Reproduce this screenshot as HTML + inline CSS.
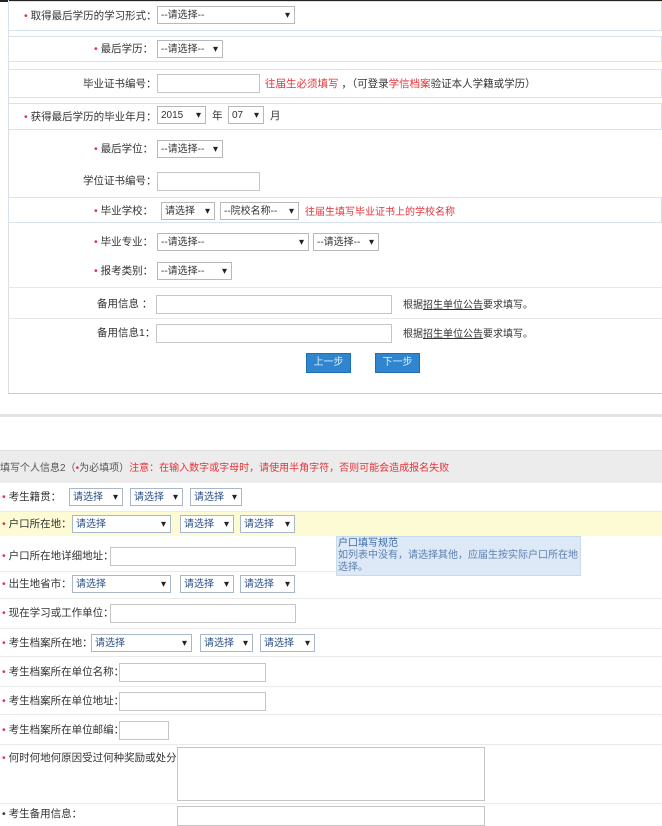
<!DOCTYPE html>
<html><head><meta charset="utf-8">
<style>
*{margin:0;padding:0;box-sizing:border-box}
body{width:662px;height:813px;overflow:hidden;background:#fff;position:relative;font-family:"Liberation Sans","Noto Sans CJK SC",sans-serif;font-size:11px;color:#333}
.a{position:absolute}
.box{position:absolute;left:8px;right:0;border:1px solid #d6e3ef;background:#fff}
.sel{position:absolute;height:18px;border:1px solid #b9b9b9;background:#fff;font-size:10px;line-height:17px;padding-left:3px;color:#333}
.sel:after{content:"▾";position:absolute;right:4px;top:0;font-size:10px;color:#222}
.sel2{border-color:#a9b8c8;color:#2c4f8a}
.inp{position:absolute;border:1px solid #c5c5c5;background:#fff;height:19px}
.lbl{position:absolute;font-size:10.5px;white-space:nowrap;color:#333;margin-top:-2px}
.st{color:#e0334a}
.red{color:#e8333a}
.line{position:absolute;left:8px;right:0;height:1px;background:#e6e9ec}
.line2{position:absolute;left:0;right:0;height:1px;background:#eaeaea}
.btn{position:absolute;height:20px;width:45px;background:#2f86cf;border:1px solid #1e6fb3;color:#dbeeff;font-size:10px;text-align:center;line-height:18px}
</style></head><body>
<div class="a" style="left:0;top:0;width:662px;height:2px;background:#222"></div>
<div class="a" style="left:8px;top:0;width:1px;height:394px;background:#ddd"></div>
<div class="a" style="left:8px;top:393px;width:654px;height:1px;background:#ccc"></div>

<div class="box" style="top:1px;height:30px"></div>
<div class="lbl" style="left:24px;top:10px"><span class="st">•</span> 取得最后学历的学习形式：</div>
<div class="sel" style="left:157px;top:6px;width:138px">--请选择--</div>

<div class="box" style="top:36px;height:26px"></div>
<div class="lbl" style="left:94px;top:43px"><span class="st">•</span> 最后学历：</div>
<div class="sel" style="left:157px;top:40px;width:66px">--请选择--</div>

<div class="box" style="top:69px;height:29px"></div>
<div class="lbl" style="left:83px;top:78px">毕业证书编号：</div>
<div class="inp" style="left:157px;top:74px;width:103px"></div>
<div class="lbl" style="left:265px;top:78px"><span class="red">往届生必须填写</span> ，（可登录<span class="red">学信档案</span>验证本人学籍或学历）</div>

<div class="box" style="top:103px;height:27px"></div>
<div class="lbl" style="left:24px;top:111px"><span class="st">•</span> 获得最后学历的毕业年月：</div>
<div class="sel" style="left:157px;top:106px;width:49px">2015</div>
<div class="lbl" style="left:212px;top:110px">年</div>
<div class="sel" style="left:228px;top:106px;width:36px">07</div>
<div class="lbl" style="left:270px;top:110px">月</div>

<div class="lbl" style="left:94px;top:143px"><span class="st">•</span> 最后学位：</div>
<div class="sel" style="left:157px;top:140px;width:66px">--请选择--</div>

<div class="lbl" style="left:83px;top:175px">学位证书编号：</div>
<div class="inp" style="left:157px;top:172px;width:103px"></div>

<div class="box" style="top:197px;height:26px"></div>
<div class="lbl" style="left:94px;top:205px"><span class="st">•</span> 毕业学校：</div>
<div class="sel" style="left:161px;top:202px;width:54px">请选择</div>
<div class="sel" style="left:220px;top:202px;width:79px">--院校名称--</div>
<div class="lbl red" style="left:305px;top:205px;font-size:10px">往届生填写毕业证书上的学校名称</div>

<div class="lbl" style="left:94px;top:236px"><span class="st">•</span> 毕业专业：</div>
<div class="sel" style="left:157px;top:233px;width:152px">--请选择--</div>
<div class="sel" style="left:313px;top:233px;width:66px">--请选择--</div>

<div class="lbl" style="left:94px;top:265px"><span class="st">•</span> 报考类别：</div>
<div class="sel" style="left:157px;top:262px;width:75px">--请选择--</div>
<div class="line" style="top:287px"></div>

<div class="lbl" style="left:97px;top:298px">备用信息 ：</div>
<div class="inp" style="left:156px;top:295px;width:236px"></div>
<div class="lbl" style="left:403px;top:298px;font-size:10px">根据<u>招生单位公告</u>要求填写。</div>
<div class="line" style="top:318px"></div>
<div class="lbl" style="left:97px;top:327px">备用信息1：</div>
<div class="inp" style="left:156px;top:324px;width:236px"></div>
<div class="lbl" style="left:403px;top:327px;font-size:10px">根据<u>招生单位公告</u>要求填写。</div>

<div class="btn" style="left:306px;top:353px">上一步</div>
<div class="btn" style="left:375px;top:353px">下一步</div>

<div class="a" style="left:0;top:414px;width:662px;height:3px;background:#e4e4e4"></div>

<div class="a" style="left:0;top:450px;width:662px;height:33px;background:#ececec;border-top:1px solid #ddd"></div>
<div class="lbl" style="left:0;top:461px;font-size:10px;color:#555">填写个人信息2（<span class="st">•</span>为必填项）<span class="red">注意：在输入数字或字母时，请使用半角字符，否则可能会造成报名失败</span></div>

<div class="lbl" style="left:2px;top:491px"><span class="st">•</span> 考生籍贯：</div>
<div class="sel sel2" style="left:69px;top:488px;width:54px">请选择</div>
<div class="sel sel2" style="left:130px;top:488px;width:53px">请选择</div>
<div class="sel sel2" style="left:190px;top:488px;width:52px">请选择</div>
<div class="line2" style="top:511px"></div>

<div class="a" style="left:0;top:512px;width:662px;height:24px;background:#fdfbd4"></div>
<div class="lbl" style="left:2px;top:518px"><span class="st">•</span> 户口所在地：</div>
<div class="sel sel2" style="left:72px;top:515px;width:99px">请选择</div>
<div class="sel sel2" style="left:180px;top:515px;width:54px">请选择</div>
<div class="sel sel2" style="left:240px;top:515px;width:55px">请选择</div>

<div class="lbl" style="left:2px;top:550px"><span class="st">•</span> 户口所在地详细地址：</div>
<div class="inp" style="left:110px;top:547px;width:186px"></div>
<div class="a" style="left:336px;top:536px;width:245px;height:40px;background:#dde9f6;border:1px solid #c9daec;font-size:10px;color:#3b6aa8;padding:1px 1px;line-height:12px">户口填写规范<br><span style="color:#5b7fb0">如列表中没有，请选择其他，应届生按实际户口所在地选择。</span></div>
<div class="line2" style="top:571px;right:82px;width:336px"></div>

<div class="lbl" style="left:2px;top:578px"><span class="st">•</span> 出生地省市：</div>
<div class="sel sel2" style="left:72px;top:575px;width:99px">请选择</div>
<div class="sel sel2" style="left:180px;top:575px;width:54px">请选择</div>
<div class="sel sel2" style="left:240px;top:575px;width:55px">请选择</div>
<div class="line2" style="top:598px"></div>

<div class="lbl" style="left:2px;top:607px"><span class="st">•</span> 现在学习或工作单位：</div>
<div class="inp" style="left:110px;top:604px;width:186px"></div>
<div class="line2" style="top:628px"></div>

<div class="lbl" style="left:2px;top:637px"><span class="st">•</span> 考生档案所在地：</div>
<div class="sel sel2" style="left:91px;top:634px;width:101px">请选择</div>
<div class="sel sel2" style="left:200px;top:634px;width:53px">请选择</div>
<div class="sel sel2" style="left:260px;top:634px;width:55px">请选择</div>
<div class="line2" style="top:656px"></div>

<div class="lbl" style="left:2px;top:666px"><span class="st">•</span> 考生档案所在单位名称：</div>
<div class="inp" style="left:119px;top:663px;width:147px"></div>
<div class="line2" style="top:686px"></div>
<div class="lbl" style="left:2px;top:695px"><span class="st">•</span> 考生档案所在单位地址：</div>
<div class="inp" style="left:119px;top:692px;width:147px"></div>
<div class="line2" style="top:714px"></div>
<div class="lbl" style="left:2px;top:724px"><span class="st">•</span> 考生档案所在单位邮编：</div>
<div class="inp" style="left:119px;top:721px;width:50px"></div>
<div class="line2" style="top:744px"></div>
<div class="lbl" style="left:2px;top:752px"><span class="st">•</span> 何时何地何原因受过何种奖励或处分：</div>
<div class="inp" style="left:177px;top:747px;width:308px;height:54px"></div>
<div class="line2" style="top:803px"></div>
<div class="inp" style="left:177px;top:806px;width:308px;height:20px"></div>
<div class="lbl" style="left:2px;top:808px">• 考生备用信息：</div>
</body></html>
